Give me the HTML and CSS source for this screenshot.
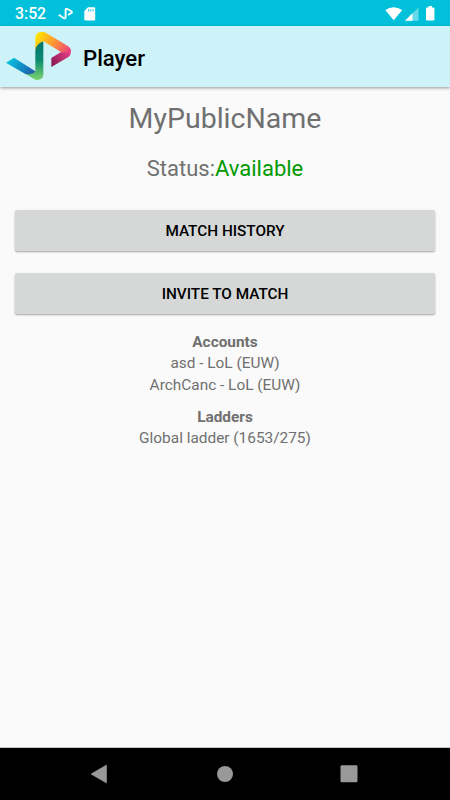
FILE: index.html
```html
<!DOCTYPE html>
<html lang="en">
<head>
    <meta charset="UTF-8">
    <meta name="viewport" content="width=device-width, initial-scale=1.0">
    <title>Player</title>
    <link rel="stylesheet" href="styles.css">
</head>
<body>
    <div class="status-bar">
        <span class="clock">3:52</span>
        <svg class="mini-logo" width="16" height="14" viewBox="0 0 16 14">
            <path d="M.8 7.8L5.6 11Q7.6 12 7.6 10V3.2Q7.6 1 9.4 2L13.3 4.3Q14.6 5.2 13.3 6L10 8" fill="none" stroke="#fff" stroke-width="1.9"/>
        </svg>
        <svg class="sd-card" width="12" height="14" viewBox="0 0 12 14">
            <path d="M4 .3H10Q11.2 .3 11.2 1.5V12.3Q11.2 13.5 10 13.5H1.5Q.3 13.5 .3 12.3V4Z" fill="#fff"/>
            <path d="M4.6 2V4.6M6.8 2V4.6M9 2V4.6" stroke="#00c1d9" stroke-width="0.8"/>
        </svg>
        <div class="system-icons">
            <svg width="18" height="14" viewBox="0 0 18 14">
                <path d="M.3 3Q8.7 -2.6 17.2 3L8.7 13.3Z" fill="#fff"/>
            </svg>
            <svg width="14" height="14" viewBox="0 0 14 14">
                <path d="M0 13.7L13.5 .4V13.7Z" fill="#66dae8"/>
                <path d="M0 13.7L7.5 6.2V13.7Z" fill="#fff"/>
            </svg>
            <svg width="9" height="15" viewBox="0 0 9 15">
                <path d="M2.5 0H6V1.5H7.6Q8.4 1.5 8.4 2.3V13.7Q8.4 14.5 7.6 14.5H.8Q0 14.5 0 13.7V2.3Q0 1.5 .8 1.5H2.5Z" fill="#fff"/>
            </svg>
        </div>
    </div>

    <header class="app-bar">
        <svg class="logo" width="80" height="61" viewBox="0 0 240 183">
            <defs>
                <linearGradient id="blue" x1="25" y1="100" x2="100" y2="150" gradientUnits="userSpaceOnUse">
                    <stop offset="0" stop-color="#08c5dc"/>
                    <stop offset="0.5" stop-color="#128fc6"/>
                    <stop offset="1" stop-color="#2752a3"/>
                </linearGradient>
                <linearGradient id="green" x1="0" y1="60" x2="0" y2="162" gradientUnits="userSpaceOnUse">
                    <stop offset="0" stop-color="#06796d"/>
                    <stop offset="0.4" stop-color="#098970"/>
                    <stop offset="1" stop-color="#7bd36d"/>
                </linearGradient>
                <linearGradient id="warm" x1="115" y1="20" x2="207" y2="82" gradientUnits="userSpaceOnUse">
                    <stop offset="0" stop-color="#ffe500"/>
                    <stop offset="0.35" stop-color="#ffad28"/>
                    <stop offset="0.7" stop-color="#f9744f"/>
                    <stop offset="1" stop-color="#ea3d83"/>
                </linearGradient>
                <linearGradient id="pink" x1="212" y1="70" x2="154" y2="117" gradientUnits="userSpaceOnUse">
                    <stop offset="0" stop-color="#ef4289"/>
                    <stop offset="1" stop-color="#851951"/>
                </linearGradient>
            </defs>
            <path d="M106 65Q108 50 130 46V145Q129 162 112 162Q104 162 98 157L76 143Q96 146 106 136Z" fill="url(#green)"/>
            <path d="M18 110L42 95L106 136Q98 147 76 144Z" fill="url(#blue)"/>
            <path d="M106 73V36Q107 17 127 17Q133 17 139 21L202 59Q213 66 213 76Q203 88 183 78L130 46Q109 53 106 73Z" fill="url(#warm)"/>
            <path d="M183 78Q205 84 211 68Q216 86 204 94L154 123V96Z" fill="url(#pink)"/>
        </svg>
        <h1 class="app-title">Player</h1>
    </header>

    <main class="content">
        <h2 class="player-name">MyPublicName</h2>
        <p class="status">Status:<span class="available">Available</span></p>

        <button class="btn">MATCH HISTORY</button>
        <button class="btn">INVITE TO MATCH</button>

        <section class="info">
            <h3>Accounts</h3>
            <p>asd - LoL (EUW)</p>
            <p>ArchCanc - LoL (EUW)</p>
        </section>
        <section class="info">
            <h3>Ladders</h3>
            <p>Global ladder (1653/275)</p>
        </section>
    </main>

    <nav class="nav-bar">
        <svg width="18" height="20" viewBox="0 0 18 20">
            <path d="M1 10L16.5 1V19Z" fill="#999" stroke="#999" stroke-width="0.6" stroke-linejoin="round"/>
        </svg>
        <svg width="18" height="20" viewBox="0 0 18 20">
            <circle cx="10" cy="10" r="8" fill="#999"/>
        </svg>
        <svg width="18" height="20" viewBox="0 0 18 20">
            <rect x="0.5" y="1.3" width="17" height="17" rx="1.3" fill="#999"/>
        </svg>
    </nav>
</body>
</html>
```

FILE: styles.css
```css
* {
    box-sizing: border-box;
}

body {
    font-family: Roboto, sans-serif;
    height: 100vh;
    margin: 0;
    display: flex;
    flex-direction: column;
    background: #fafafa;
    color: #707070;
    overflow: hidden;
}

h1, h2, h3, p {
    margin: 0;
}

svg {
    display: block;
    flex-shrink: 0;
}

/* Android status bar */
.status-bar {
    height: 26px;
    flex-shrink: 0;
    display: flex;
    align-items: center;
    padding: 1px 15px 0;
    background: #00c1d9;
    color: #fff;
}

.clock {
    width: 43px;
    font-size: 15.8px;
    font-weight: 500;
    line-height: 24px;
}

.sd-card {
    margin-left: 10px;
}

.system-icons {
    margin-left: auto;
    display: flex;
    align-items: center;
    gap: 2px;
}

.system-icons svg:last-child {
    margin-left: 5px;
}

/* Title bar */
.app-bar {
    position: relative;
    height: 61px;
    flex-shrink: 0;
    display: flex;
    align-items: center;
    background: #cdf2f8;
    box-shadow: 0 1px 3px rgba(0, 0, 0, 0.4);
}

.app-title {
    margin-left: 3px;
    padding-top: 2px;
    font-size: 22.2px;
    font-weight: 500;
    color: #000;
}

.content {
    flex: 1;
    display: flex;
    flex-direction: column;
    align-items: center;
    padding: 13px 15px 0;
    text-align: center;
}

.player-name {
    font-size: 28.5px;
    font-weight: 400;
    line-height: 38px;
}

.status {
    margin: 16px 0 26px;
    font-size: 22px;
    line-height: 30px;
}

.available {
    color: #009900;
}

.btn {
    width: 100%;
    height: 41px;
    margin-bottom: 22px;
    padding: 0;
    border: none;
    border-radius: 2px;
    background: #d6d8d7;
    box-shadow: 0 1px 2px rgba(0, 0, 0, 0.35);
    font-family: inherit;
    font-size: 15.3px;
    font-weight: 500;
    color: #000;
}

.btn:last-of-type {
    margin-bottom: 18px;
}

.info {
    margin-bottom: 11px;
    font-size: 15.4px;
    line-height: 21.3px;
}

.info h3 {
    font-size: inherit;
    font-weight: 700;
}

/* Navigation buttons */
.nav-bar {
    height: 53px;
    flex-shrink: 0;
    display: flex;
    align-items: center;
    justify-content: space-between;
    padding: 0 92px 0 90px;
    border-top: 1px solid #c4c4c4;
    background: #000;
}
```
